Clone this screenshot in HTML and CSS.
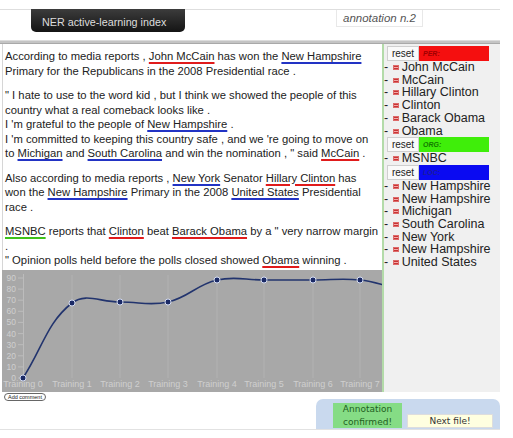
FILE: index.html
```html
<!DOCTYPE html>
<html>
<head>
  <title>NER active-learning index</title>
  <link rel="stylesheet" href="styles.css">
</head>
<body>

<div class="page">
  <div class="topbar">
    <div class="tab">NER active-learning index</div>
    <div class="counter">annotation n.2</div>
  </div>
  <div class="divider"></div>

  <div class="main">
    <div class="left">
      <div class="doc">
        <p>According to media reports , <span class="per">John McCain</span> has won the <span class="loc">New Hampshire</span> Primary for the Republicans in the 2008 Presidential race .</p>
        <p>" I hate to use to the word kid , but I think we showed the people of this country what a real comeback looks like .<br>I 'm grateful to the people of <span class="loc">New Hampshire</span> .<br>I 'm committed to keeping this country safe , and we 're going to move on to <span class="loc">Michigan</span> and <span class="loc">South Carolina</span> and win the nomination , " said <span class="per">McCain</span> .</p>
        <p>Also according to media reports , <span class="loc">New York</span> Senator <span class="per">Hillary Clinton</span> has won the <span class="loc">New Hampshire</span> Primary in the 2008 <span class="loc">United States</span> Presidential race .</p>
        <p><span class="org">MSNBC</span> reports that <span class="per">Clinton</span> beat <span class="per">Barack Obama</span> by a " very narrow margin .<br>" Opinion polls held before the polls closed showed <span class="per">Obama</span> winning .</p>
      </div>

      <div class="chart">
        <svg width="380" height="122" viewBox="0 0 380 122">
          <g class="grid">
            <line x1="70" y1="5" x2="70" y2="108"/>
            <line x1="118" y1="5" x2="118" y2="108"/>
            <line x1="166" y1="5" x2="166" y2="108"/>
            <line x1="215" y1="5" x2="215" y2="108"/>
            <line x1="262" y1="5" x2="262" y2="108"/>
            <line x1="311" y1="5" x2="311" y2="108"/>
            <line x1="358" y1="5" x2="358" y2="108"/>
          </g>
          <g class="axis">
            <line x1="21.5" y1="4" x2="21.5" y2="108"/>
            <line x1="16" y1="108" x2="21" y2="108"/>
            <line x1="16" y1="96.9" x2="21" y2="96.9"/>
            <line x1="16" y1="85.8" x2="21" y2="85.8"/>
            <line x1="16" y1="74.7" x2="21" y2="74.7"/>
            <line x1="16" y1="63.6" x2="21" y2="63.6"/>
            <line x1="16" y1="52.4" x2="21" y2="52.4"/>
            <line x1="16" y1="41.3" x2="21" y2="41.3"/>
            <line x1="16" y1="30.2" x2="21" y2="30.2"/>
            <line x1="16" y1="19.1" x2="21" y2="19.1"/>
            <line x1="16" y1="8" x2="21" y2="8"/>
          </g>
          <g class="ylabels">
            <text x="14" y="111">0</text>
            <text x="14" y="99.9">10</text>
            <text x="14" y="88.8">20</text>
            <text x="14" y="77.7">30</text>
            <text x="14" y="66.6">40</text>
            <text x="14" y="55.4">50</text>
            <text x="14" y="44.3">60</text>
            <text x="14" y="33.2">70</text>
            <text x="14" y="22.1">80</text>
            <text x="14" y="11">90</text>
          </g>
          <g class="xlabels">
            <text x="21" y="117">Training 0</text>
            <text x="70" y="117">Training 1</text>
            <text x="118" y="117">Training 2</text>
            <text x="166" y="117">Training 3</text>
            <text x="215" y="117">Training 4</text>
            <text x="262" y="117">Training 5</text>
            <text x="311" y="117">Training 6</text>
            <text x="358" y="117">Training 7</text>
          </g>
          <path class="curve" d="M21,108 C40.6,78 44.7,52.8 70,33 C83.5,22.4 98.8,32.2 118,32 C137.2,31.8 147.7,36.2 166,32 C186.5,27.4 194.5,14.7 215,10 C232.9,5.9 242.8,10 262,10 C281.2,10 291.8,10 311,10 C330.4,10 339.4,8.2 358,10 C377.4,11.8 387,19 406,19"/>
          <g class="dots">
            <circle cx="21" cy="108" r="3"/>
            <circle cx="70" cy="33" r="3"/>
            <circle cx="118" cy="32" r="3"/>
            <circle cx="166" cy="32" r="3"/>
            <circle cx="215" cy="10" r="3"/>
            <circle cx="262" cy="10" r="3"/>
            <circle cx="311" cy="10" r="3"/>
            <circle cx="358" cy="10" r="3"/>
          </g>
        </svg>
      </div>
    </div>

    <div class="entities">
      <div class="group-head">
        <button class="reset">reset</button>
        <div class="tag tag-per">PER:</div>
      </div>
      <div class="item">- <span class="rm"></span>John McCain</div>
      <div class="item">- <span class="rm"></span>McCain</div>
      <div class="item">- <span class="rm"></span>Hillary Clinton</div>
      <div class="item">- <span class="rm"></span>Clinton</div>
      <div class="item">- <span class="rm"></span>Barack Obama</div>
      <div class="item">- <span class="rm"></span>Obama</div>

      <div class="group-head">
        <button class="reset">reset</button>
        <div class="tag tag-org">ORG:</div>
      </div>
      <div class="item">- <span class="rm"></span>MSNBC</div>

      <div class="group-head">
        <button class="reset">reset</button>
        <div class="tag tag-loc">LOC:</div>
      </div>
      <div class="item">- <span class="rm"></span>New Hampshire</div>
      <div class="item">- <span class="rm"></span>New Hampshire</div>
      <div class="item">- <span class="rm"></span>Michigan</div>
      <div class="item">- <span class="rm"></span>South Carolina</div>
      <div class="item">- <span class="rm"></span>New York</div>
      <div class="item">- <span class="rm"></span>New Hampshire</div>
      <div class="item">- <span class="rm"></span>United States</div>
    </div>
  </div>

  <div class="bottom">
    <button class="comment">Add comment</button>
    <div class="actions">
      <button class="confirm">Annotation<br>confirmed!</button>
      <button class="next">Next file!</button>
    </div>
  </div>
</div>

</body>
</html>
```

FILE: styles.css
```css
body {
  margin: 0;
  font-family: "Liberation Sans", Arial, sans-serif;
  color: #222;
  background: #fff;
}

.page {
  width: 500px;
  padding-top: 9px;
}

/* header */
.topbar {
  display: flex;
  align-items: flex-start;
  height: 30px;
  border-top: 1px solid #dedede;
}

.tab {
  box-sizing: border-box;
  width: 154px;
  height: 23px;
  margin: -1px 0 0 31px;
  padding: 3px 0 0 11px;
  line-height: 20px;
  font-size: 10.75px;
  color: #ddd;
  background: linear-gradient(#3c3c3c, #141414);
  border-radius: 0 0 5px 5px;
}

.counter {
  height: 16px;
  margin-left: 151px;
  padding: 0 6px;
  border: 1px solid #e8e8e8;
  border-top: 0;
  font-size: 11.5px;
  font-style: italic;
  line-height: 16px;
  color: #555;
}

.divider {
  height: 2px;
  background: #c4c4c4;
  border-top: 1px solid #dcdcdc;
  border-bottom: 1px solid #a9a9a9;
}

/* document + chart */
.main {
  display: flex;
  margin-left: 2px;
}

.left {
  width: 380px;
}

.doc {
  box-sizing: border-box;
  height: 226px;
  padding: 5px 3px 0 2px;
  border-left: 1px solid #d6d6d6;
  font-size: 11.25px;
  line-height: 14.5px;
}

.doc p {
  margin: 0 0 10px;
}

.per, .loc, .org {
  text-decoration: underline;
  text-decoration-thickness: 2px;
  text-underline-offset: 2px;
}

.per { text-decoration-color: #e01b1b; }
.loc { text-decoration-color: #2233c4; }
.org { text-decoration-color: #3ec21a; }

.chart {
  height: 122px;
  background: #a8a8a8;
}

.chart svg {
  display: block;
}

.grid line {
  stroke: rgba(255, 255, 255, 0.12);
  stroke-width: 1;
}

.axis line {
  stroke: #bcbcbc;
  stroke-width: 1;
}

.ylabels text, .xlabels text {
  font-family: "Liberation Sans", Arial, sans-serif;
  fill: #cfcfcf;
}

.ylabels text {
  font-size: 8.5px;
  text-anchor: end;
}

.xlabels text {
  font-size: 9px;
  text-anchor: middle;
}

.curve {
  fill: none;
  stroke: #22346e;
  stroke-width: 1.6;
}

.dots circle {
  fill: #1b2a66;
  stroke: #d4dcf2;
  stroke-width: 1;
}

/* entity list */
.entities {
  flex: 1;
  padding-top: 2px;
  border-left: 2px solid #b3dba9;
  background: #f0f0f0;
  font-size: 12.5px;
  line-height: 12.7px;
}

.group-head {
  display: flex;
  height: 15px;
  margin-left: 3px;
}

.reset {
  box-sizing: border-box;
  width: 32px;
  height: 15px;
  padding: 0;
  border: 1px solid #cfcfcf;
  background: #fafafa;
  font-family: "Liberation Sans", Arial, sans-serif;
  font-size: 10px;
  color: #222;
}

.tag {
  box-sizing: border-box;
  width: 70px;
  height: 15px;
  padding-left: 4px;
  font-size: 7px;
  font-style: italic;
  font-weight: bold;
  line-height: 15px;
}

.tag-per { background: #f50f0f; color: #a00000; }
.tag-org { background: #3fee0a; color: #137a00; }
.tag-loc { background: #0a0af2; color: #1c1c9a; }

.rm {
  display: inline-block;
  width: 6px;
  height: 5px;
  margin: 0 3px 0 1px;
  vertical-align: 1px;
  border-radius: 1px;
  background: linear-gradient(#c83535 0 40%, #f1a9a9 40% 60%, #c83535 60%);
  box-shadow: inset 0 0 0 1px #de6a6a;
}

/* footer */
.bottom {
  display: flex;
  align-items: flex-start;
  height: 37px;
  border-bottom: 1px solid #e2e2e2;
}

.comment {
  height: 8px;
  margin: 1px 0 0 4px;
  padding: 0 3px;
  border: 1px solid #666;
  border-radius: 4px;
  background: #fff;
  font-family: "Liberation Sans", Arial, sans-serif;
  font-size: 5.5px;
  line-height: 6px;
  color: #222;
}

.actions {
  display: flex;
  align-items: flex-start;
  box-sizing: border-box;
  width: 184px;
  height: 30px;
  margin: 7px 0 0 auto;
  padding: 4px 0 0 17px;
  background: #c9d9ee;
  border-radius: 7px 7px 0 0;
}

.confirm {
  width: 69px;
  height: 25px;
  padding: 0;
  border: 0;
  background: #85dc85;
  font-family: "DejaVu Sans", sans-serif;
  font-size: 9px;
  line-height: 12.5px;
  color: #1f5f1f;
}

.next {
  box-sizing: border-box;
  width: 86px;
  height: 14px;
  margin: 11px 0 0 5px;
  padding: 0;
  border: 1px solid #ddd;
  background: #ffffe0;
  font-family: "DejaVu Sans", sans-serif;
  font-size: 9px;
  line-height: 12px;
  color: #333;
}
```
